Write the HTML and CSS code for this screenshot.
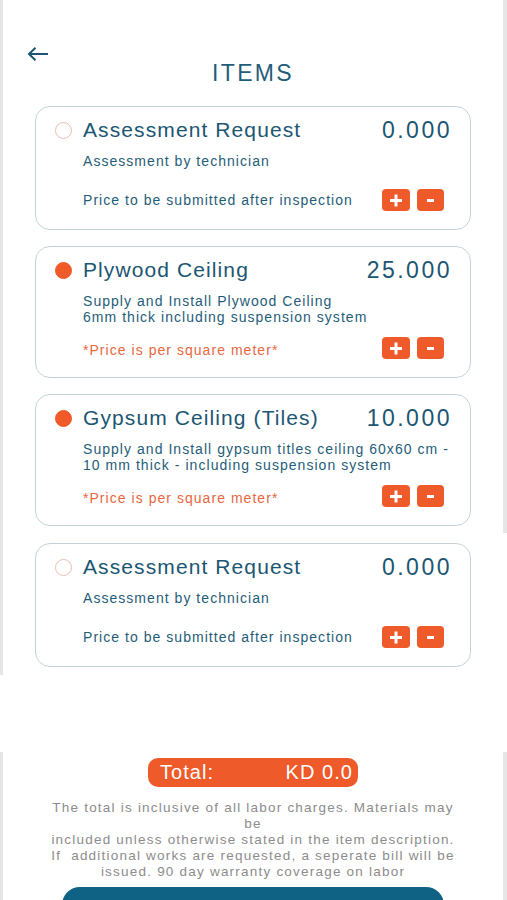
FILE: index.html
```html
<!DOCTYPE html>
<html lang="en">

<head>
    <meta charset="UTF-8">
    <meta name="viewport" content="width=device-width, initial-scale=1.0">
    <title>Items</title>
    <link rel="stylesheet" href="styles.css">
</head>

<body>

    <div class="panel panel-top">
        <header class="head">
            <svg class="back" width="22" height="14" viewBox="0 0 22 14">
                <path d="M21 7H2M8.5 0.8L2 7l6.5 6.2" fill="none" stroke="#1b5672" stroke-width="2" />
            </svg>
            <h1 class="title">ITEMS</h1>
        </header>

        <div class="list">
            <div class="card">
                <div class="card-head">
                    <span class="radio"></span>
                    <span class="name">Assessment Request</span>
                    <span class="price">0.000</span>
                </div>
                <div class="desc">Assessment by technician</div>
                <div class="card-foot">
                    <span class="note">Price to be submitted after inspection</span>
                    <div class="btns">
                        <button class="btn"><svg width="28" height="22" viewBox="0 0 28 22"><path d="M8 11.5h12M14 5.5v12" stroke="#fff" stroke-width="3" /></svg></button>
                        <button class="btn"><svg width="27" height="22" viewBox="0 0 27 22"><path d="M10 11.5h7" stroke="#fff" stroke-width="3" /></svg></button>
                    </div>
                </div>
            </div>

            <div class="card">
                <div class="card-head">
                    <span class="radio on"></span>
                    <span class="name">Plywood Ceiling</span>
                    <span class="price">25.000</span>
                </div>
                <div class="desc">Supply and Install Plywood Ceiling<br>6mm thick including suspension system</div>
                <div class="card-foot">
                    <span class="note warn">*Price is per square meter*</span>
                    <div class="btns">
                        <button class="btn"><svg width="28" height="22" viewBox="0 0 28 22"><path d="M8 11.5h12M14 5.5v12" stroke="#fff" stroke-width="3" /></svg></button>
                        <button class="btn"><svg width="27" height="22" viewBox="0 0 27 22"><path d="M10 11.5h7" stroke="#fff" stroke-width="3" /></svg></button>
                    </div>
                </div>
            </div>

            <div class="card">
                <div class="card-head">
                    <span class="radio on"></span>
                    <span class="name">Gypsum Ceiling (Tiles)</span>
                    <span class="price">10.000</span>
                </div>
                <div class="desc">Supply and Install gypsum titles ceiling 60x60 cm -<br>10 mm thick - including suspension system</div>
                <div class="card-foot">
                    <span class="note warn">*Price is per square meter*</span>
                    <div class="btns">
                        <button class="btn"><svg width="28" height="22" viewBox="0 0 28 22"><path d="M8 11.5h12M14 5.5v12" stroke="#fff" stroke-width="3" /></svg></button>
                        <button class="btn"><svg width="27" height="22" viewBox="0 0 27 22"><path d="M10 11.5h7" stroke="#fff" stroke-width="3" /></svg></button>
                    </div>
                </div>
            </div>
        </div>
    </div>

    <div class="panel panel-mid">
        <div class="card">
            <div class="card-head">
                <span class="radio"></span>
                <span class="name">Assessment Request</span>
                <span class="price">0.000</span>
            </div>
            <div class="desc">Assessment by technician</div>
            <div class="card-foot">
                <span class="note">Price to be submitted after inspection</span>
                <div class="btns">
                    <button class="btn"><svg width="28" height="22" viewBox="0 0 28 22"><path d="M8 11.5h12M14 5.5v12" stroke="#fff" stroke-width="3" /></svg></button>
                    <button class="btn"><svg width="27" height="22" viewBox="0 0 27 22"><path d="M10 11.5h7" stroke="#fff" stroke-width="3" /></svg></button>
                </div>
            </div>
        </div>
    </div>

    <div class="gap"></div>

    <div class="panel panel-bottom">
        <div class="total">
            <span>Total:</span>
            <span>KD 0.0</span>
        </div>
        <p class="terms">The total is inclusive of all labor charges. Materials may<br>be<br>included unless otherwise stated in the item description.<br>If&nbsp; additional works are requested, a seperate bill will be<br>issued. 90 day warranty coverage on labor</p>
        <button class="submit"></button>
    </div>

</body>

</html>
```
FILE: styles.css
```css
* {
    padding: 0;
    margin: 0;
    box-sizing: border-box;
}

body {
    background: #fff;
    font-family: "Liberation Sans", Arial, sans-serif;
    letter-spacing: 0.065em;
    color: #1b5672;
    overflow: hidden;
}

.panel {
    border-left: 3px solid #e6e6e6;
    border-right: 4px solid #e6e6e6;
}

.panel-top {
    height: 533px;
}

.panel-mid {
    height: 142px;
    border-right-color: #fff;
    padding: 10px 32px 0 32px;
}

.gap {
    height: 77px;
}

/* header */
.head {
    padding-top: 47px;
    height: 106px;
}

.back {
    display: block;
    margin-left: 24px;
}

.title {
    margin-top: -2px;
    text-align: center;
    font-size: 23px;
    font-weight: normal;
    line-height: 28px;
    letter-spacing: 0.1em;
    color: #1f5d7a;
}

/* cards */
.list {
    display: flex;
    flex-direction: column;
    gap: 16px;
    padding: 0 32px;
}

.card {
    border: 1px solid #c3d2d8;
    border-radius: 15px;
    padding: 11px 18px 18px 19px;
}

.card-head {
    display: flex;
    align-items: center;
    height: 24px;
}

.radio {
    width: 17px;
    height: 17px;
    border-radius: 50%;
    border: 1.5px solid #ebbdb2;
    margin-right: 11px;
}

.radio.on {
    background: #ef5a28;
    border-color: #ef5a28;
}

.name {
    font-size: 21px;
    letter-spacing: 1.1px;
}

.price {
    margin-left: auto;
    font-size: 23px;
    letter-spacing: 2.5px;
}

.desc {
    margin: 11px 0 0 28px;
    min-height: 24px;
    font-size: 14px;
    line-height: 16px;
    white-space: nowrap;
    color: #1f5d78;
}

.card-foot {
    display: flex;
    align-items: center;
    justify-content: space-between;
    margin: 12px 8px 0 28px;
}

.note {
    font-size: 14px;
    color: #1f5d78;
}

.note.warn {
    padding-top: 3px;
    color: #e8673f;
}

.btns {
    display: flex;
    gap: 7px;
}

.btn {
    display: block;
    border: none;
    border-radius: 4px;
    background: #ee5a2a;
    height: 22px;
}

.btn svg {
    display: block;
}

/* bottom */
.panel-bottom {
    padding-top: 6px;
    text-align: center;
}

.total {
    display: flex;
    justify-content: space-between;
    align-items: center;
    width: 210px;
    height: 29px;
    margin: 0 auto;
    padding: 0 5px 0 12px;
    border-radius: 10px;
    background: #ee5a2a;
    color: #fff;
    font-size: 20px;
}

.terms {
    margin-top: 13px;
    font-size: 13.5px;
    line-height: 16px;
    letter-spacing: 0.09em;
    color: #8c8c8c;
}

.submit {
    display: block;
    width: 382px;
    height: 54px;
    margin: 7px 0 0 59px;
    border: none;
    border-radius: 18px;
    background: #0f6283;
}
```
